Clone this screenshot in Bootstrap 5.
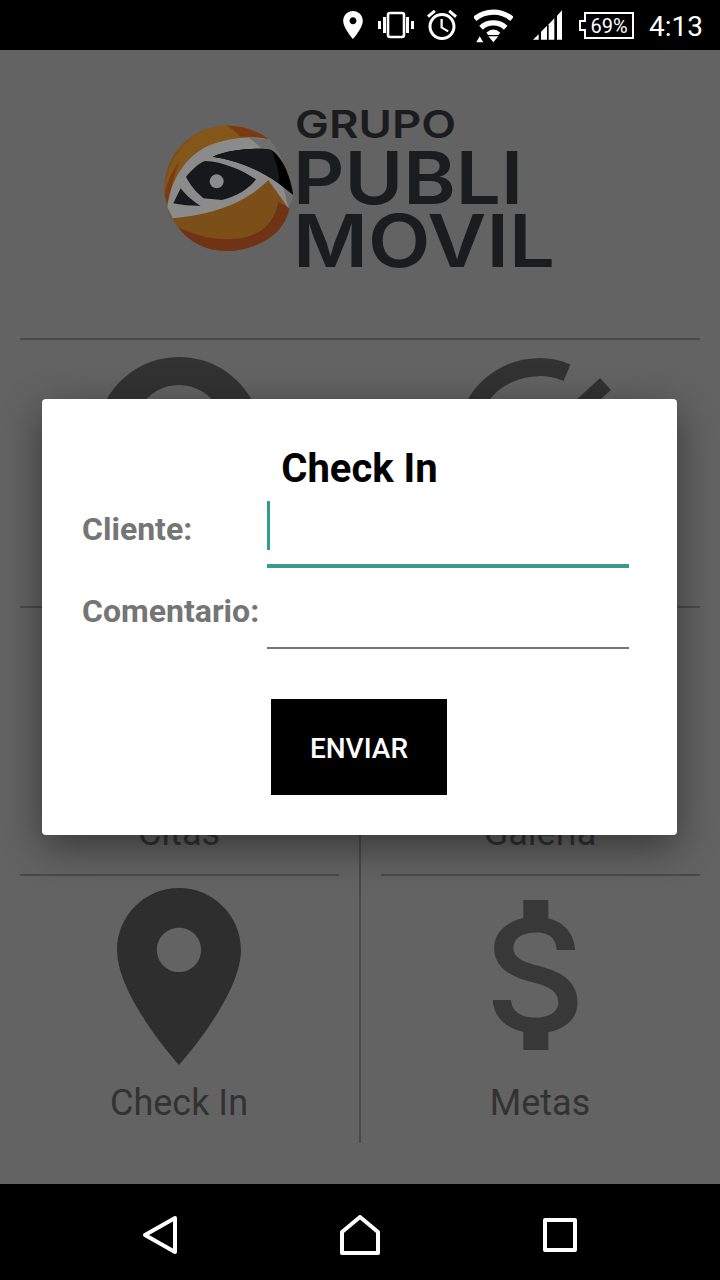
<!DOCTYPE html>
<html lang="es">
<head>
    <meta charset="UTF-8">
    <meta name="viewport" content="width=device-width, initial-scale=1.0">
    <link href="https://cdn.jsdelivr.net/npm/bootstrap@5.3.0/dist/css/bootstrap.min.css" rel="stylesheet">
    <title>Grupo Publi Movil</title>
    <style>
        body { width: 720px; height: 1280px; overflow: hidden; background: #636363; font-family: Roboto, "Liberation Sans", sans-serif; }
        .phone { width: 720px; height: 1280px; position: relative; }

        .status-bar { height: 50px; background: #000; padding-right: 17px; color: #fff; }
        .status-bar svg { display: block; flex: none; }
        .st-pin { margin-right: 15px; }
        .st-vib { margin-right: 10px; }
        .st-alarm { margin-right: 14px; }
        .st-wifi { margin-right: 20px; }
        .st-signal { margin-right: 17px; }
        .st-batt { margin-right: 15px; }
        .st-time { font-size: 28px; line-height: 50px; padding-top: 3px; }

        .app-area { height: 1134px; background: #636363; overflow: hidden; }
        .logo-wrap { height: 288px; padding: 50px 0 0 160px; }
        .logo-wrap svg { display: block; }
        .logo-text { font-family: Inter, sans-serif; font-weight: 600; fill: #1b1c1e; }

        .top-rule { height: 2px; background: #4a4a4a; margin: 0 20px; }
        .menu-row { margin-left: -1px; margin-right: 1px; }
        .menu-cell { height: 268px; position: relative; padding-top: 13px; }
        .menu-row-first .menu-cell { height: 267px; }
        .menu-rule { height: 2px; background: #4a4a4a; position: absolute; top: -1px; }
        .rule-left { left: 21px; right: 20px; }
        .rule-right { left: 20px; right: 19px; }
        .divided { border-left: 2px solid #4a4a4a; }
        .icon-slot { height: 195px; }
        .icon-slot svg { display: block; }
        .slot-short { height: 193px; }
        .dollar-icon { margin-top: 12px; }
        .menu-label { font-size: 36px; line-height: 40px; color: #323232; }

        .nav-bar { height: 96px; background: #000; }
        .nav-slot { width: 200px; margin-top: 6px; }

        .checkin-dialog { position: absolute; left: 42px; top: 399px; width: 635px; height: 436px; border: 0; border-radius: 4px; background: #fff; box-shadow: 0 12px 40px rgba(0,0,0,.45); padding: 50px 48px 40px 40px; }
        .dialog-title { font-size: 40px; line-height: 40px; font-weight: 700; color: #000; text-align: center; margin: 0 0 12px 8px; }
        .field-row { height: 66px; margin-bottom: 17px; position: relative; }
        .field-first { height: 67px; margin-bottom: 15px; }
        .field-label { width: 185px; flex: none; font-size: 32px; font-weight: 700; line-height: 40px; color: #757575; margin: 8px 0 0; }
        .field-input { width: 362px; height: 66px; border: 0; border-bottom: 2px solid #757575; border-radius: 0; padding: 0; background: transparent; box-shadow: none; }
        .field-active { height: 67px; border-bottom: 4px solid #3b9a8c; }
        .text-cursor { position: absolute; left: 185px; top: 0; width: 3px; height: 49px; background: #2f9d8f; }
        .send-btn { display: block; width: 176px; height: 96px; margin: 50px 0 0 189px; padding: 3px 0 0; border: 0; border-radius: 0; background: #000; color: #fff; font-size: 28px; font-weight: 500; }
        .send-btn:hover { background: #000; color: #fff; }
    </style>
</head>
<body>

<div class="phone">
    <div class="status-bar d-flex align-items-center justify-content-end">
        <svg class="st-pin" width="20" height="28" viewBox="5 2 14 20" fill="#fff"><path d="M12 2C8.13 2 5 5.13 5 9c0 5.25 7 13 7 13s7-7.75 7-13c0-3.87-3.13-7-7-7zm0 9.5c-1.38 0-2.5-1.12-2.5-2.5s1.12-2.5 2.5-2.5 2.5 1.12 2.5 2.5-1.12 2.5-2.5 2.5z"/></svg>
        <svg class="st-vib" width="36" height="28" viewBox="0 0 36 28" fill="#fff"><rect x="10" y="2" width="16" height="24" rx="2" fill="none" stroke="#fff" stroke-width="2.6"/><rect x="0" y="10" width="3" height="8"/><rect x="5" y="6" width="3" height="16"/><rect x="28" y="6" width="3" height="16"/><rect x="33" y="10" width="3" height="8"/></svg>
        <svg class="st-alarm" width="36" height="36" viewBox="0 0 24 24" fill="#fff"><path d="M22 5.72l-4.6-3.86-1.29 1.53 4.6 3.86L22 5.72zM7.88 3.39L6.6 1.86 2 5.71l1.29 1.53 4.59-3.85zM12.5 8H11v6l4.75 2.85.75-1.23-4-2.37V8zM12 4c-4.97 0-9 4.03-9 9s4.03 9 9 9 9-4.03 9-9-4.03-9-9-9zm0 16c-3.87 0-7-3.13-7-7s3.13-7 7-7 7 3.13 7 7-3.13 7-7 7z"/></svg>
        <svg class="st-wifi" width="39" height="36" viewBox="430 22 117 108" fill="#fff"><path d="M432 58A87 87 0 0 1 544 58" fill="none" stroke="#fff" stroke-width="16"/><path d="M451 84A55 55 0 0 1 525 84" fill="none" stroke="#fff" stroke-width="16"/><path d="M467 99Q488 80 509 99L503 106H473Z"/><path d="M473 110H503L488 128Z"/><path d="M447 110L458 128H437Z"/></svg>
        <svg class="st-signal" width="29" height="30" viewBox="608 33 87 89" fill="#fff"><path d="M608 122L625 105V122Z"/><path d="M632 98L650 80V122H632Z"/><path d="M655 75L672 57V122H655Z"/><path d="M680 50L695 33V122H680Z"/></svg>
        <svg class="st-batt" width="55" height="28" viewBox="0 0 55 28"><path d="M6 2H54V27H6V19H1V10H6Z" fill="none" stroke="#fff" stroke-width="2"/><text x="30" y="22" text-anchor="middle" font-family="Roboto, sans-serif" font-size="20" fill="#fff">69%</text></svg>
        <span class="st-time">4:13</span>
    </div>

    <div class="app-area">
        <div class="logo-wrap">
            <svg width="400" height="190" viewBox="160 100 400 190">
                <g transform="translate(160 120) scale(.3333)">
                    <circle cx="201" cy="205" r="188" fill="#7c4f18"/>
                    <path d="M325 58C280 22 200 0 130 32C70 58 28 120 15 200L22 262C45 170 90 100 160 80C210 62 270 50 325 58Z" fill="#85561a"/>
                    <path d="M200 17C245 16 295 32 325 58C290 50 262 50 240 50C228 35 215 24 200 17Z" fill="#7a3b14"/>
                    <path d="M14 225C20 185 38 150 58 125C42 165 30 210 26 262Z" fill="#7a3b14"/>
                    <path d="M388 265C375 340 295 393 200 393C140 393 90 370 55 322C115 352 190 368 262 350C315 335 345 300 355 245Z" fill="#703414"/>
                    <path d="M22 262C30 190 70 110 150 75C200 55 270 45 325 58C360 95 390 160 400 225L385 265L325 180C270 235 190 280 38 295Z" fill="#8b8b8b"/>
                    <path d="M265 52L325 58C360 95 390 160 400 225L385 265C370 180 335 100 265 52Z" fill="#6f6f6f"/>
                    <path d="M158 110C210 88 290 82 335 90C370 115 392 170 400 225L355 190C300 150 230 120 158 110Z" fill="#000"/>
                    <path d="M158 110C210 88 290 82 335 90C350 130 360 160 356 188C300 150 230 120 158 110Z" fill="#16181b"/>
                    <path d="M78 170C95 150 115 130 135 123C190 125 245 150 288 178C270 205 230 230 185 240L130 235C105 212 90 195 78 170Z" fill="#16181b"/>
                    <circle cx="170" cy="184" r="21" fill="#8b8b8b"/>
                    <path d="M62 205C78 225 100 245 122 258C95 258 60 255 40 250Z" fill="#16181b"/>
                </g>
                <text class="logo-text" x="295" y="138" font-size="38" textLength="161" lengthAdjust="spacingAndGlyphs">GRUPO</text>
                <text class="logo-text" x="293" y="204" font-size="73" textLength="230" lengthAdjust="spacingAndGlyphs">PUBLI</text>
                <text class="logo-text" x="293" y="267" font-size="73" textLength="262" lengthAdjust="spacingAndGlyphs">MOVIL</text>
            </svg>
        </div>

        <div class="top-rule"></div>

        <div class="row g-0 menu-row menu-row-first">
            <div class="col-6 menu-cell text-center">
                <div class="icon-slot d-flex justify-content-center">
                    <svg width="180" height="192" viewBox="0 1 180 192"><path fill-rule="evenodd" fill="#323232" d="M90 5a83 83 0 1 0 .01 0zM90 33a45 45 0 1 1-.01 0z"/></svg>
                </div>
                <div class="menu-label">Clientes</div>
            </div>
            <div class="col-6 menu-cell text-center">
                <div class="icon-slot d-flex justify-content-center">
                    <svg width="180" height="192" viewBox="0 1 180 192" fill="none" stroke="#323232"><path stroke-width="18" d="M118 20.7A73 73 0 1 0 163 87"/><path stroke-width="16" d="M156.5 32L84.5 98"/></svg>
                </div>
                <div class="menu-label">Tareas</div>
            </div>
        </div>

        <div class="row g-0 menu-row">
            <div class="col-6 menu-cell text-center">
                <div class="menu-rule rule-left"></div>
                <div class="icon-slot slot-short"></div>
                <div class="menu-label">Citas</div>
            </div>
            <div class="col-6 menu-cell divided text-center">
                <div class="menu-rule rule-right"></div>
                <div class="icon-slot slot-short"></div>
                <div class="menu-label">Galeria</div>
            </div>
        </div>

        <div class="row g-0 menu-row">
            <div class="col-6 menu-cell text-center">
                <div class="menu-rule rule-left"></div>
                <div class="icon-slot d-flex justify-content-center">
                    <svg width="124" height="177" viewBox="5 2 14 20" fill="#2e2e2e"><path d="M12 2C8.13 2 5 5.13 5 9c0 5.25 7 13 7 13s7-7.75 7-13c0-3.87-3.13-7-7-7zm0 9.5c-1.38 0-2.5-1.12-2.5-2.5s1.12-2.5 2.5-2.5 2.5 1.12 2.5 2.5-1.12 2.5-2.5 2.5z"/></svg>
                </div>
                <div class="menu-label">Check In</div>
            </div>
            <div class="col-6 menu-cell divided text-center">
                <div class="menu-rule rule-right"></div>
                <div class="icon-slot d-flex justify-content-center">
                    <svg class="dollar-icon" width="100" height="150" viewBox="6 3 12 18" fill="#383838"><path d="M11.8 10.9c-2.27-.59-3-1.2-3-2.15 0-1.09 1.01-1.85 2.7-1.85 1.78 0 2.44.85 2.5 2.1h2.21c-.07-1.72-1.12-3.3-3.21-3.81V3h-3v2.16c-1.94.42-3.5 1.68-3.5 3.61 0 2.31 1.91 3.46 4.7 4.13 2.5.6 3 1.48 3 2.41 0 .69-.49 1.79-2.7 1.79-2.06 0-2.87-.92-2.98-2.1h-2.2c.12 2.19 1.76 3.42 3.68 3.83V21h3v-2.15c1.95-.37 3.5-1.5 3.5-3.55 0-2.84-2.43-3.81-4.7-4.4z"/></svg>
                </div>
                <div class="menu-label">Metas</div>
            </div>
        </div>
    </div>

    <div class="nav-bar d-flex justify-content-center align-items-center">
        <div class="nav-slot d-flex justify-content-center">
            <svg width="37" height="40" viewBox="0 0 37 40" fill="none" stroke="#fff" stroke-width="4" stroke-linejoin="round"><path d="M33 3V37L3 20Z"/></svg>
        </div>
        <div class="nav-slot d-flex justify-content-center">
            <svg width="40" height="40" viewBox="0 0 40 40" fill="none" stroke="#fff" stroke-width="4" stroke-linejoin="round"><path d="M20 2L38 17V38H2V17Z"/></svg>
        </div>
        <div class="nav-slot d-flex justify-content-center">
            <svg width="34" height="34" viewBox="0 0 34 34" fill="none" stroke="#fff" stroke-width="4" stroke-linejoin="round"><rect x="2" y="2" width="30" height="30"/></svg>
        </div>
    </div>

    <div class="card checkin-dialog">
        <h5 class="dialog-title">Check In</h5>
        <form>
            <div class="field-row field-first d-flex">
                <label class="field-label form-label">Cliente:</label>
                <input class="form-control field-input field-active" type="text">
                <span class="text-cursor"></span>
            </div>
            <div class="field-row d-flex">
                <label class="field-label form-label">Comentario:</label>
                <input class="form-control field-input" type="text">
            </div>
            <button class="btn send-btn" type="button">ENVIAR</button>
        </form>
    </div>
</div>

</body>
</html>
